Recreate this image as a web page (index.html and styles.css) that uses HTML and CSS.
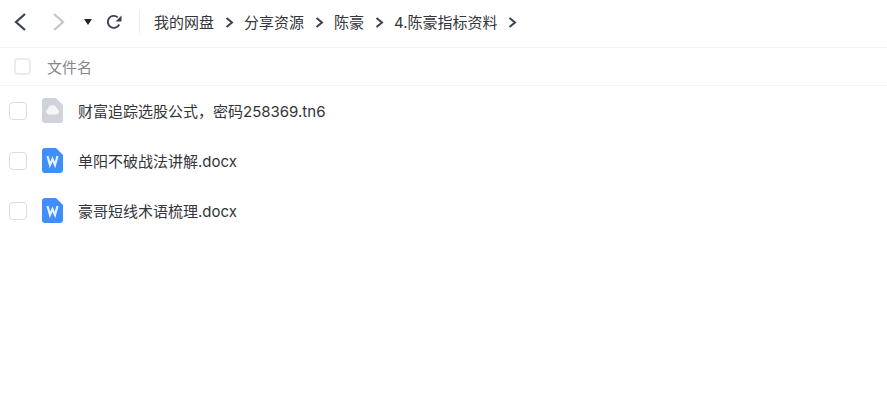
FILE: index.html
```html
<!DOCTYPE html>
<html lang="zh-CN">
<head>
    <meta charset="UTF-8">
    <title>分享资源</title>
    <link rel="stylesheet" href="styles.css">
</head>
<body>
    <div class="toolbar">
        <div class="nav-btns">
            <svg class="nav-back" width="16" height="20" viewBox="0 0 16 20"><path d="M13 2 L4 10 L13 18" fill="none" stroke="#3c4150" stroke-width="2.2"/></svg>
            <svg class="nav-forward" width="16" height="20" viewBox="0 0 16 20"><path d="M3 2 L12 10 L3 18" fill="none" stroke="#c4c6cb" stroke-width="2.2"/></svg>
            <svg class="nav-drop" width="8" height="6" viewBox="0 0 8 6"><path d="M0 0 H8 L4 6 Z" fill="#25262b"/></svg>
            <svg class="nav-refresh" width="16" height="16" viewBox="0 0 16 16"><path d="M13.2 10.5 A6 6 0 1 1 11.8 3.4" fill="none" stroke="#3c4150" stroke-width="1.9"/><path d="M15.5 1.5 V7.5 H9.5 Z" fill="#3c4150"/></svg>
        </div>
        <div class="crumbs">
            <span>我的网盘</span>
            <svg class="sep" width="9" height="11" viewBox="0 0 9 11"><path d="M1.5 1 L7 5.5 L1.5 10" fill="none" stroke="#3c4150" stroke-width="2"/></svg>
            <span>分享资源</span>
            <svg class="sep" width="9" height="11" viewBox="0 0 9 11"><path d="M1.5 1 L7 5.5 L1.5 10" fill="none" stroke="#3c4150" stroke-width="2"/></svg>
            <span>陈豪</span>
            <svg class="sep" width="9" height="11" viewBox="0 0 9 11"><path d="M1.5 1 L7 5.5 L1.5 10" fill="none" stroke="#3c4150" stroke-width="2"/></svg>
            <span>4.陈豪指标资料</span>
            <svg class="sep" width="9" height="11" viewBox="0 0 9 11"><path d="M1.5 1 L7 5.5 L1.5 10" fill="none" stroke="#3c4150" stroke-width="2"/></svg>
        </div>
    </div>

    <div class="list-head">
        <span class="check head-check"></span>
        <span class="head-name">文件名</span>
    </div>

    <div class="file-list">
        <div class="file-row">
            <span class="check"></span>
            <svg class="file-icon" width="21" height="25" viewBox="0 0 21 25">
                <path d="M3 0 H14 L21 7 V22 A3 3 0 0 1 18 25 H3 A3 3 0 0 1 0 22 V3 A3 3 0 0 1 3 0 Z" fill="#d0d3da"/>
                <path d="M6.5 16.5 A3 3 0 0 1 6 10.8 A4.6 4.6 0 0 1 15 10.8 A3 3 0 0 1 14.8 16.5 Z" fill="#f4f5f7"/>
            </svg>
            <span class="file-name">财富追踪选股公式，密码258369.tn6</span>
        </div>
        <div class="file-row">
            <span class="check"></span>
            <svg class="file-icon" width="21" height="25" viewBox="0 0 21 25">
                <path d="M3 0 H14 L21 7 V22 A3 3 0 0 1 18 25 H3 A3 3 0 0 1 0 22 V3 A3 3 0 0 1 3 0 Z" fill="#3f8efc"/>
                <path d="M5.5 8 L8 17 L10.5 11 L13 17 L15.5 8" fill="none" stroke="#e8f1ff" stroke-width="2.2"/>
            </svg>
            <span class="file-name">单阳不破战法讲解.docx</span>
        </div>
        <div class="file-row">
            <span class="check"></span>
            <svg class="file-icon" width="21" height="25" viewBox="0 0 21 25">
                <path d="M3 0 H14 L21 7 V22 A3 3 0 0 1 18 25 H3 A3 3 0 0 1 0 22 V3 A3 3 0 0 1 3 0 Z" fill="#3f8efc"/>
                <path d="M5.5 8 L8 17 L10.5 11 L13 17 L15.5 8" fill="none" stroke="#e8f1ff" stroke-width="2.2"/>
            </svg>
            <span class="file-name">豪哥短线术语梳理.docx</span>
        </div>
    </div>
</body>
</html>
```

FILE: styles.css
```css
* {
    margin: 0;
    padding: 0;
    box-sizing: border-box;
}

body {
    background: #fff;
    color: #33353a;
    font-family: Inter, "Noto Sans CJK SC", sans-serif;
    font-size: 15px;
    overflow: hidden;
}

.toolbar {
    display: flex;
    align-items: center;
    height: 48px;
    padding-bottom: 4px;
    border-bottom: 1px solid #f2f2f4;
}

.nav-btns {
    display: flex;
    align-items: center;
    width: 140px;
    height: 22px;
    padding-left: 12px;
    border-right: 1px solid #ececee;
}

.nav-back {
    margin-right: 23px;
}

.nav-forward {
    margin-right: 17px;
}

.nav-drop {
    margin-right: 14px;
}

.crumbs {
    display: flex;
    align-items: center;
    padding-left: 14px;
    gap: 10.5px;
}

.sep {
    margin-top: 1px;
}

.list-head {
    display: flex;
    align-items: center;
    height: 38px;
    padding-left: 14px;
    border-bottom: 1px solid #f4f4f6;
}

.check {
    width: 18px;
    height: 18px;
    margin-top: 2px;
    border: 1px solid #d8dce4;
    border-radius: 4px;
    background: #fff;
    flex-shrink: 0;
}

.head-check {
    width: 17px;
    height: 17px;
    margin-top: 0;
    border: 2px solid #ececef;
}

.head-name {
    margin-left: 16px;
    color: #85878d;
}

.file-list {
    display: flex;
    flex-direction: column;
}

.file-row {
    display: flex;
    align-items: center;
    height: 50px;
    padding-bottom: 2px;
    padding-left: 9px;
}

.file-icon {
    margin-left: 15px;
    flex-shrink: 0;
}

.file-name {
    margin-left: 15px;
}
```
